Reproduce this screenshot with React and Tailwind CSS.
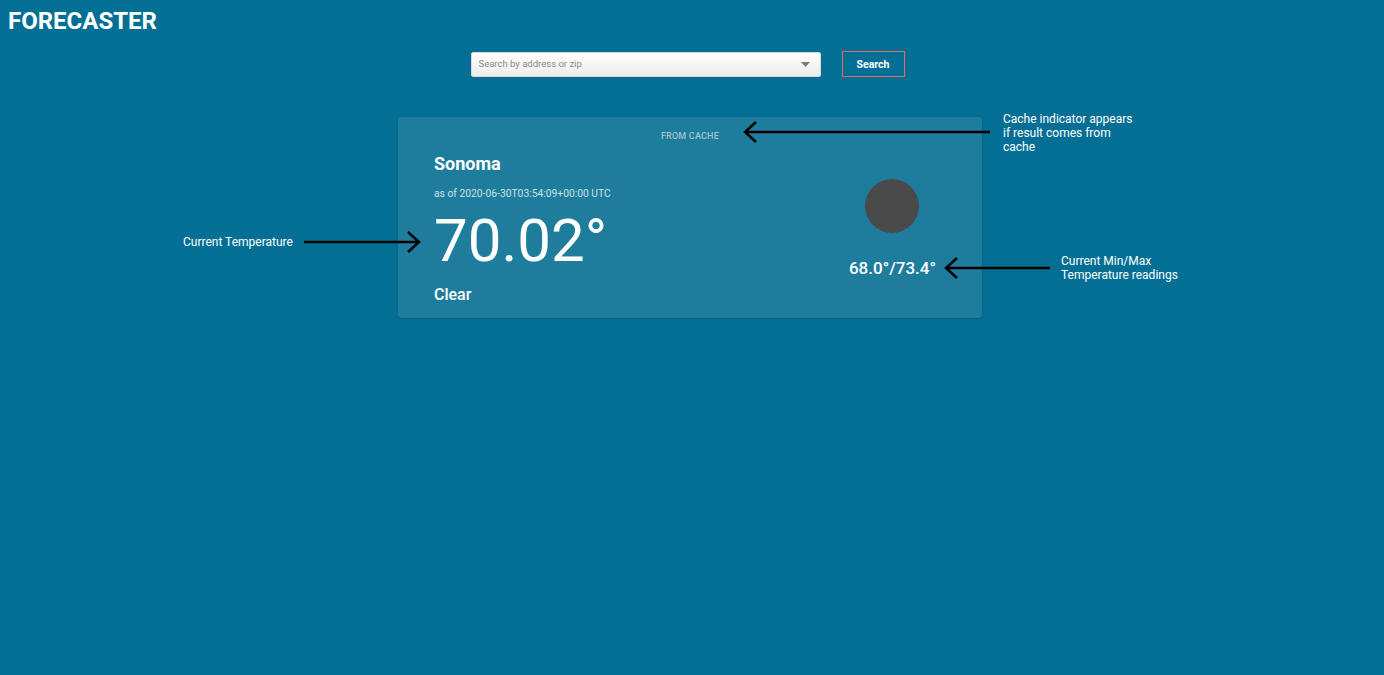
import React from "react";

export default function App() {
  return (
    <div className="relative min-h-[675px] w-full bg-[#046f94] text-white" style={{ fontFamily: "Roboto, 'Liberation Sans', sans-serif" }}>
      <div className="px-2 pt-[7px]">
        <h1 className="text-[24px] font-bold leading-[28px] tracking-[0px]">FORECASTER</h1>
      </div>
      <div className="mt-[16px] flex justify-center items-center gap-[21px] pr-[9px]">
        <div className="flex h-[25px] w-[350px] items-center justify-between rounded-[2px] border border-[#d8d8d8] bg-gradient-to-b from-white to-[#ececec] px-[7px]">
          <span className="text-[9.5px] text-[#8a8a8a]">Search by address or zip</span>
          <svg width="9" height="5" viewBox="0 0 9 5" className="mr-[3px]"><path d="M0 0h9L4.5 5z" fill="#777" /></svg>
        </div>
        <button className="flex h-[26px] w-[63px] items-center justify-center border-[1.5px] border-[#ea6a5c] pt-[1px] text-[10.5px] font-bold text-white">Search</button>
      </div>

      <div className="mt-[40px] flex justify-center pr-[4px]">
        <div className="relative flex h-[201px] w-[584px] flex-col rounded-[4px] bg-[#1e7d9d] shadow-[0_1px_2px_rgba(0,0,0,0.15)]">
          <div className="pr-[263px] pt-[14px] text-right text-[9px] font-medium tracking-[0.2px] text-[#a5c3ce] leading-[11px]">FROM CACHE</div>
          <div className="flex flex-1 pl-[36px] pr-[46px]">
            <div className="flex flex-1 flex-col">
              <div className="mt-[11px] text-[18px] font-bold leading-[22px]">Sonoma</div>
              <div className="mt-[12px] text-[10.3px] leading-[13px] text-[#cbe0e8]">as of 2020-06-30T03:54:09+00:00 UTC</div>
              <div className="mt-[11px] text-[60px] font-normal leading-[60px]">70.02°</div>
              <div className="mt-[14px] text-[16px] font-medium leading-[20px]">Clear</div>
            </div>
            <div className="flex flex-col items-center pt-[37px]">
              <div className="h-[54px] w-[54px] rounded-full bg-[#4a4a4b]" />
              <div className="mt-[25px] text-[17px] font-medium leading-[20px]">68.0°/73.4°</div>
            </div>
          </div>
        </div>
      </div>

      {/* annotations */}
      <div className="absolute left-[1003px] top-[112px] text-[12px] leading-[14px] text-white">
        Cache indicator appears<br />if result comes from<br />cache
      </div>
      <svg className="absolute left-[740px] top-[121px]" width="260" height="22" viewBox="0 0 260 22">
        <path d="M4 11H250M16 1L5 11L16 21" stroke="#000" strokeWidth="2.5" fill="none" />
      </svg>

      <div className="absolute left-[183px] top-[235px] text-[12px] leading-[14px] text-white">Current Temperature</div>
      <svg className="absolute left-[300px] top-[231px]" width="125" height="22" viewBox="0 0 125 22">
        <path d="M4 11H118M108 1L119 11L108 21" stroke="#000" strokeWidth="2.5" fill="none" />
      </svg>

      <div className="absolute left-[1061px] top-[254px] text-[12px] leading-[14px] text-white">
        Current Min/Max<br />Temperature readings
      </div>
      <svg className="absolute left-[940px] top-[257px]" width="115" height="22" viewBox="0 0 115 22">
        <path d="M6 11H110M17 1L6 11L17 21" stroke="#000" strokeWidth="2.5" fill="none" />
      </svg>
    </div>
  );
}
